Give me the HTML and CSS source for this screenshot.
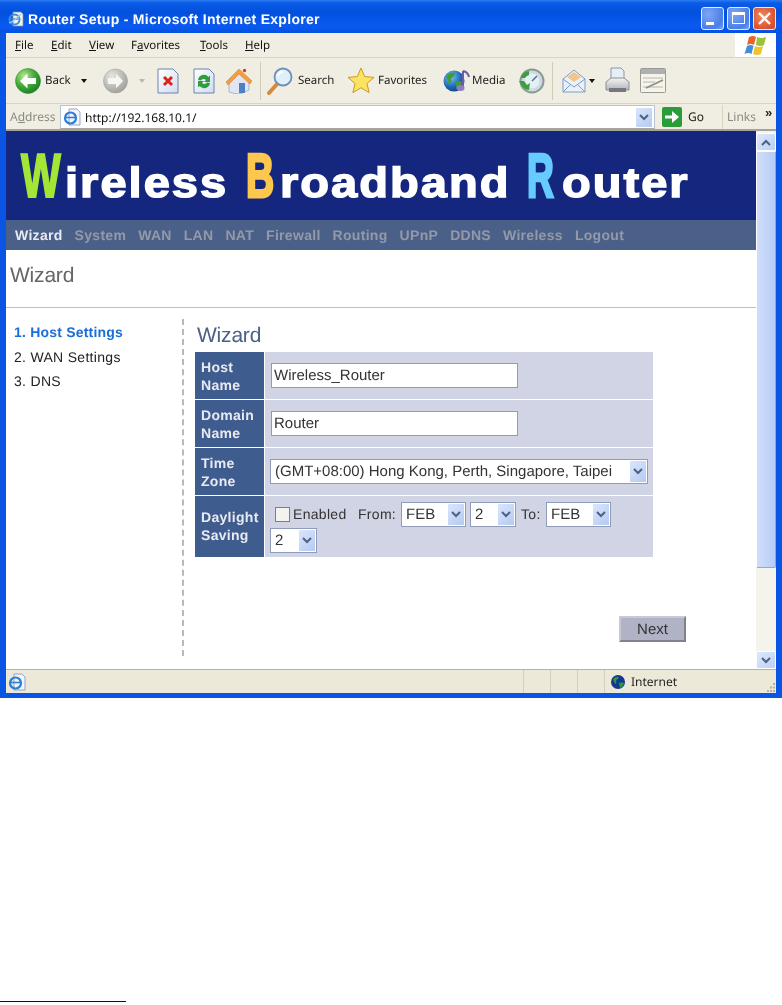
FILE: index.html
```html
<!DOCTYPE html>
<html lang="en">
<head>
<meta charset="utf-8">
<title>Router Setup</title>
<link rel="stylesheet" href="styles.css">
</head>
<body>
<svg class="defs" aria-hidden="true"><defs>
<radialGradient id="gGreen" cx=".35" cy=".3" r=".8"><stop offset="0" stop-color="#b8e890"/><stop offset=".5" stop-color="#45ab3a"/><stop offset="1" stop-color="#127a20"/></radialGradient>
<radialGradient id="gGray" cx=".35" cy=".3" r=".8"><stop offset="0" stop-color="#e6e6e0"/><stop offset="1" stop-color="#9b9b95"/></radialGradient>
<radialGradient id="gGlobe" cx=".35" cy=".3" r=".8"><stop offset="0" stop-color="#7fc4f5"/><stop offset=".6" stop-color="#1d67b8"/><stop offset="1" stop-color="#0d3a80"/></radialGradient>
<linearGradient id="gDoc" x1="0" y1="0" x2="1" y2="1"><stop offset="0" stop-color="#ffffff"/><stop offset="1" stop-color="#cfdcf2"/></linearGradient>
<linearGradient id="gTool" x1="0" y1="0" x2="0" y2="1"><stop offset="0" stop-color="#f5f5f2"/><stop offset="1" stop-color="#b3b5b8"/></linearGradient>
</defs></svg>

<div class="window">
  <header class="titlebar">
    <svg class="title-icon" width="16" height="16" viewBox="0 0 16 16"><path d="M5 1h8l2 2v12H5z" fill="#f4f1e6" stroke="#8a8f9c" stroke-width=".7"/><circle cx="6.500" cy="8.500" r="5" fill="none" stroke="#3a8ee0" stroke-width="2"/><path d="M3 8h7" stroke="#3a8ee0" stroke-width="1.500"/><path d="M1 12C5 11 10 6 13 3" fill="none" stroke="#9cd0f5" stroke-width="1.200"/></svg>
    <span class="title-text">Router Setup - Microsoft Internet Explorer</span>
    <div class="win-buttons">
      <span class="win-btn"><svg width="23" height="23" viewBox="0 0 23 23"><rect x="5" y="15" width="8" height="3" fill="#fff"/></svg></span>
      <span class="win-btn"><svg width="23" height="23" viewBox="0 0 23 23"><rect x="5.500" y="5.500" width="12" height="11" fill="none" stroke="#fff"/><rect x="5" y="5" width="13" height="3" fill="#fff"/></svg></span>
      <span class="win-btn win-close"><svg width="23" height="23" viewBox="0 0 23 23"><path d="M6 6l11 11M17 6L6 17" stroke="#fff" stroke-width="2.400"/></svg></span>
    </div>
  </header>

  <nav class="menubar">
    <span class="menu-item"><u>F</u>ile</span>
    <span class="menu-item"><u>E</u>dit</span>
    <span class="menu-item"><u>V</u>iew</span>
    <span class="menu-item">F<u>a</u>vorites</span>
    <span class="menu-item"><u>T</u>ools</span>
    <span class="menu-item"><u>H</u>elp</span>
    <span class="flag">
      <svg width="24" height="22" viewBox="0 0 24 22"><path d="M5 3q4-2 7 0l-2 8q-3-2-7 0z" fill="#e8642c"/><path d="M13 3q4 2 9 0l-2 8q-4 2-8 0z" fill="#9ac23c"/><path d="M3 12q4-2 6.500 0l-2 8q-3-2-7 0z" fill="#3d8fe0"/><path d="M11 12q4 2 8 0l-2 8q-4 2-8 0z" fill="#f2c22e"/></svg>
    </span>
  </nav>

  <div class="toolbar">
    <svg class="i-back" width="26" height="26" viewBox="0 0 26 26"><circle cx="13" cy="13" r="12.500" fill="url(#gGreen)" stroke="#2f7f2a" stroke-width=".5"/><path d="M5 13l7.500-7.500v4.500H21v6h-8.500v4.500z" fill="#fff"/></svg>
    <span class="lbl lbl-back">Back</span>
    <span class="caret c-back"></span>
    <svg class="i-forward" width="25" height="26" viewBox="0 0 26 26"><circle cx="13" cy="13" r="12.500" fill="url(#gGray)" stroke="#9a9a94" stroke-width=".5"/><path d="M21 13l-7.500-7.500v4.500H5v6h8.500v4.500z" fill="#f6f6f2"/></svg>
    <span class="caret caret-off c-forward"></span>
    <svg class="i-stop" width="22" height="26" viewBox="0 0 22 26"><path d="M1 1h15l5 5v19H1z" fill="url(#gDoc)" stroke="#6d83ad"/><path d="M7 9l8 8M15 9l-8 8" stroke="#d8251c" stroke-width="3"/></svg>
    <svg class="i-refresh" width="22" height="26" viewBox="0 0 22 26"><path d="M1 1h15l5 5v19H1z" fill="url(#gDoc)" stroke="#6d83ad"/><path d="M5 12a6 6 0 0 1 10.500-3L17 7.500V14h-6l2-2a3 3 0 0 0-5 .5z" fill="#2f9e3a"/><path d="M17 15a6 6 0 0 1-10.500 3L5 19.500V13h6l-2 2a3 3 0 0 0 5-.5z" fill="#2f9e3a"/></svg>
    <svg class="i-home" width="26" height="26" viewBox="0 0 26 26"><path d="M3 13v11q6 2 11 2l9-4V12L13 4z" fill="#dfe6f2" stroke="#8ea0bd" stroke-width=".7"/><rect x="13" y="15" width="6" height="10" fill="#4f7fc4"/><path d="M0 14L13 1l13 12-2 3L13 6 2 17z" fill="#f0a040" stroke="#c8772a" stroke-width=".5"/><circle cx="18.500" cy="2.500" r="1.700" fill="#d8392c"/></svg>
    <span class="tsep s-one"></span>
    <svg class="i-search" width="26" height="28" viewBox="0 0 26 28"><path d="M2 26L11 16" stroke="#d88a3a" stroke-width="4" stroke-linecap="round"/><circle cx="16" cy="10" r="8.500" fill="#dff0fb" stroke="#6f8fb8" stroke-width="1.800"/><path d="M11 9a5 5 0 0 1 5-4" fill="none" stroke="#fff" stroke-width="2"/></svg>
    <span class="lbl lbl-search">Search</span>
    <svg class="i-star" width="28" height="27" viewBox="0 0 28 27"><path d="M14 1l3.700 8.600 9.300.8-7 6.100 2.100 9.100-8.100-4.800-8.100 4.800 2.100-9.100-7-6.100 9.300-.8z" fill="#fde362" stroke="#c99a26"/></svg>
    <span class="lbl lbl-fav">Favorites</span>
    <svg class="i-media" width="27" height="26" viewBox="0 0 27 26"><circle cx="11" cy="13" r="10.500" fill="url(#gGlobe)"/><path d="M3 8q4-5 9-3-1 5-4 5 1 4-2 6zM12 14q4-2 7 0-1 6-5 7z" fill="#3e9c3a"/><path d="M20 3v15" stroke="#6d5aa8" stroke-width="2"/><path d="M20 3q5 1 6 6" fill="none" stroke="#6d5aa8" stroke-width="2"/><ellipse cx="17.500" cy="20" rx="4" ry="3" fill="#8d7cc4"/></svg>
    <span class="lbl lbl-media">Media</span>
    <svg class="i-history" width="27" height="26" viewBox="0 0 27 26"><circle cx="14" cy="13" r="11.500" fill="#cfd9de" stroke="#8a9a94" stroke-width="2"/><circle cx="14" cy="13" r="7.500" fill="#e4f0f8"/><path d="M14 13l5-5" stroke="#5a6f7a" stroke-width="1.500"/><path d="M1 13h5l3 4 3-2-1 7q-6 0-10-9z" fill="#3ba03a"/><path d="M3 10q1-6 8-7v4q-3 1-4 3z" fill="#3ba03a"/></svg>
    <span class="tsep s-two"></span>
    <svg class="i-mail" width="24" height="26" viewBox="0 0 24 26"><path d="M1 11L12 2l11 9v13H1z" fill="#eaf1fb" stroke="#7d9cc8"/><path d="M5 9l7-5 7 5-7 5z" fill="#f2c68a"/><path d="M1 11l11 8 11-8M1 24l8-8M23 24l-8-8" fill="none" stroke="#7d9cc8"/></svg>
    <span class="caret c-mail"></span>
    <svg class="i-print" width="25" height="27" viewBox="0 0 25 27"><path d="M6 1h10l3 3v10H6z" fill="#e8eef6" stroke="#8a97a8"/><path d="M1 15l5-4h13l5 4v8H1z" fill="url(#gTool)" stroke="#8a8f98"/><rect x="4" y="21" width="17" height="4" fill="#75797f"/></svg>
    <svg class="i-edit" width="26" height="25" viewBox="0 0 26 25"><rect x=".5" y=".5" width="25" height="24" rx="1" fill="#f5f3ea" stroke="#9a9a92"/><rect x="1" y="1" width="24" height="5" fill="#aeb0b2"/><path d="M3 10h20M3 14h12M3 19h20" stroke="#b8b8b0"/><path d="M6 20L23 12" stroke="#8d8d88" stroke-width="1.500"/></svg>
  </div>

  <div class="addressbar">
    <span class="addr-label">A<u>d</u>dress</span>
    <div class="addr-field">
      <svg class="addr-icon" width="18" height="18" viewBox="0 0 18 18"><path d="M6 1h8l3 3v13H6z" fill="#f4f5f8" stroke="#7f93b5" stroke-width=".8"/><circle cx="7.500" cy="10" r="5.500" fill="none" stroke="#2d7ed6" stroke-width="2.200"/><path d="M3 9.500h9" stroke="#2d7ed6" stroke-width="1.600"/></svg>
      <span class="addr-url">http://192.168.10.1/</span>
      <span class="arrow-btn addr-arrow"><svg width="10" height="7" viewBox="0 0 10 7"><path d="M1 1l4 4 4-4" fill="none" stroke="#4d6185" stroke-width="2"/></svg></span>
    </div>
    <svg class="go-icon" width="20" height="20" viewBox="0 0 20 20"><rect width="20" height="20" rx="2" fill="#2b9c3a"/><path d="M3 8.500h7V4l7 6-7 6v-4.500H3z" fill="#fff"/></svg>
    <span class="go-label">Go</span>
    <span class="links-sep"></span>
    <span class="links-label">Links</span>
    <span class="links-more">»</span>
  </div>

  <div class="viewport">
    <main class="page">
      <div class="banner">
        <span class="cap cap-w">W</span><span class="word w-one">ireless</span><span class="cap cap-b">B</span><span class="word w-two">roadband</span><span class="cap cap-r">R</span><span class="word">outer</span>
      </div>
      <nav class="tabs">
        <a class="tab tab-active">Wizard</a><a class="tab">System</a><a class="tab">WAN</a><a class="tab">LAN</a><a class="tab">NAT</a><a class="tab">Firewall</a><a class="tab">Routing</a><a class="tab">UPnP</a><a class="tab">DDNS</a><a class="tab">Wireless</a><a class="tab">Logout</a>
      </nav>
      <h1 class="page-title">Wizard</h1>
      <div class="content">
        <ol class="steps">
          <li class="step step-active">1. Host Settings</li>
          <li class="step">2. WAN Settings</li>
          <li class="step">3. DNS</li>
        </ol>
        <section class="pane">
          <h2 class="pane-title">Wizard</h2>
          <form class="form">
            <div class="f-label">Host<br>Name</div>
            <div class="f-value"><input class="text-input" type="text" value="Wireless_Router"></div>
            <div class="f-label">Domain<br>Name</div>
            <div class="f-value"><input class="text-input" type="text" value="Router"></div>
            <div class="f-label">Time<br>Zone</div>
            <div class="f-value f-tz">
              <span class="sel sel-tz"><select><option>(GMT+08:00) Hong Kong, Perth, Singapore, Taipei</option></select><span class="arrow-btn"><svg width="10" height="7" viewBox="0 0 10 7"><path d="M1 1l4 4 4-4" fill="none" stroke="#4d6185" stroke-width="2"/></svg></span></span>
            </div>
            <div class="f-label f-label-dst">Daylight<br>Saving</div>
            <div class="f-value f-dst">
              <div class="dst-line">
                <input class="check" type="checkbox"><span class="dst-enabled">Enabled</span><span class="dst-from">From:</span>
                <span class="sel sel-mon"><select><option>FEB</option></select><span class="arrow-btn"><svg width="10" height="7" viewBox="0 0 10 7"><path d="M1 1l4 4 4-4" fill="none" stroke="#4d6185" stroke-width="2"/></svg></span></span>
                <span class="sel sel-day"><select><option>2</option></select><span class="arrow-btn"><svg width="10" height="7" viewBox="0 0 10 7"><path d="M1 1l4 4 4-4" fill="none" stroke="#4d6185" stroke-width="2"/></svg></span></span>
                <span class="dst-to">To:</span>
                <span class="sel sel-mon"><select><option>FEB</option></select><span class="arrow-btn"><svg width="10" height="7" viewBox="0 0 10 7"><path d="M1 1l4 4 4-4" fill="none" stroke="#4d6185" stroke-width="2"/></svg></span></span>
              </div>
              <div class="dst-line">
                <span class="sel sel-day2"><select><option>2</option></select><span class="arrow-btn"><svg width="10" height="7" viewBox="0 0 10 7"><path d="M1 1l4 4 4-4" fill="none" stroke="#4d6185" stroke-width="2"/></svg></span></span>
              </div>
            </div>
          </form>
          <div class="actions"><button class="next" type="button">Next</button></div>
        </section>
      </div>
    </main>
    <aside class="scrollbar">
      <span class="sb-btn sb-up"><svg width="10" height="7" viewBox="0 0 10 7"><path d="M1 6l4-4 4 4" fill="none" stroke="#4d6185" stroke-width="2"/></svg></span>
      <span class="sb-thumb"></span>
      <span class="sb-track"></span>
      <span class="sb-btn"><svg width="10" height="7" viewBox="0 0 10 7"><path d="M1 1l4 4 4-4" fill="none" stroke="#4d6185" stroke-width="2"/></svg></span>
    </aside>
  </div>

  <footer class="statusbar">
    <svg class="st-icon" width="18" height="18" viewBox="0 0 18 18"><path d="M6 1h8l3 3v13H6z" fill="#f4f5f8" stroke="#7f93b5" stroke-width=".8"/><circle cx="7.500" cy="10" r="5.500" fill="none" stroke="#2d7ed6" stroke-width="2.200"/><path d="M3 9.500h9" stroke="#2d7ed6" stroke-width="1.600"/></svg>
    <span class="st-cell st-first"></span><span class="st-cell"></span><span class="st-cell"></span><span class="st-cell"></span>
    <svg class="st-globe" width="14" height="14" viewBox="0 0 14 14"><circle cx="7" cy="7" r="7" fill="#12388f"/><path d="M2 4q3-3 6-2-1 3-3 3 1 3-1 4zM8 8q3-1 5 0-1 4-4 5z" fill="#2f9a35"/></svg>
    <span class="st-zone">Internet</span>
    <svg class="st-grip" width="11" height="11" viewBox="0 0 11 11"><path d="M8 1h2v2H8zM5 4.500h2v2H5zM8 4.500h2v2H8zM2 8h2v2H2zM5 8h2v2H5zM8 8h2v2H8z" fill="#b5b29e"/></svg>
  </footer>
</div>
<div class="footnote-rule"></div>
</body>
</html>
```
FILE: styles.css
```css
* { box-sizing: border-box; text-rendering: geometricPrecision; }
html, body { margin: 0; height: 1005px; overflow: hidden; background: #fff; }
body { font-family: "Liberation Sans", Arial, sans-serif; }
.defs { position: absolute; width: 0; height: 0; }

.window {
  height: 698px;
  display: flex;
  flex-direction: column;
  padding: 0 6px 5px 0;
  background: #0a55e4;
  filter: blur(.4px);
}
.titlebar {
  height: 33px;
  margin-right: -6px;
  display: flex;
  align-items: center;
  padding: 4px 6px 0 8px;
  background: linear-gradient(180deg, #2c7cf0 0, #0a5ce8 3px, #0350dd 12px, #0a5af0 26px, #0550e0 33px);
}
.title-icon { flex: none; }
.title-text {
  margin-left: 4px;
  color: #fff;
  font: bold 14px "Liberation Sans", sans-serif;
  letter-spacing: .3px;
}
.win-buttons { margin-left: auto; display: flex; gap: 3px; }
.win-btn {
  width: 23px; height: 23px;
  border: 1px solid #e4ecfc;
  border-radius: 3px;
  background: radial-gradient(circle at 30% 30%, #7ea6f4, #4a7ee8 70%, #78a0ee);
  display: block;
  overflow: hidden;
}
.win-btn svg { display: block; margin: -1px; }
.win-close { background: radial-gradient(circle at 40% 40%, #ee8a66, #d9502a 75%); }

.menubar {
  height: 25px;
  margin-left: 6px;
  display: flex;
  align-items: center;
  padding-left: 9px;
  background: #f0eee2;
  border-bottom: 1px solid #d8d4c2;
  font: 11.500px "Noto Sans", sans-serif;
  color: #111;
}
.menu-item:nth-child(1) { width: 36px; }
.menu-item:nth-child(2) { width: 38px; }
.menu-item:nth-child(3) { width: 42px; }
.menu-item:nth-child(4) { width: 69px; }
.menu-item:nth-child(5) { width: 45px; }
.flag {
  margin-left: auto;
  width: 41px;
  height: 24px;
  background: #fff;
  display: flex;
  align-items: center;
  justify-content: center;
}

.toolbar {
  height: 46px;
  margin-left: 6px;
  display: flex;
  align-items: center;
  padding-left: 9px;
  background: #f0eee2;
  border-bottom: 1px solid #d8d4c2;
  flex: none;
}
.toolbar svg { flex: none; }
.lbl { font: 11.500px "Noto Sans", sans-serif; color: #222; white-space: nowrap; flex: none; }
.lbl-back { width: 25px; margin-left: 4px; }
.lbl-search { width: 37px; margin-left: 5px; }
.lbl-fav { width: 50px; margin-left: 3px; }
.lbl-media { width: 32px; margin-left: 2px; }
.caret { width: 0; height: 0; flex: none; border: 3px solid transparent; border-top: 4px solid #111; border-bottom: 0; }
.caret-off { border-top-color: #b9b8ac; }
.c-back { margin-left: 11px; }
.c-mail { margin-left: 3px; }
.c-forward { margin-left: 11px; }
.i-forward { margin-left: 16px; }
.i-stop { margin-left: 12px; }
.i-refresh { margin-left: 14px; }
.i-home { margin-left: 11px; }
.i-search { margin-left: 6px; }
.i-star { margin-left: 12px; }
.i-media { margin-left: 15px; }
.i-history { margin-left: 14px; }
.i-mail { margin-left: 9px; }
.i-print { margin-left: 10px; }
.i-edit { margin-left: 10px; }
.tsep { width: 1px; height: 38px; background: #cfcbb8; flex: none; }
.s-one { margin-left: 8px; }
.s-two { margin-left: 7px; }

.addressbar {
  height: 25px;
  margin-left: 6px;
  display: flex;
  align-items: center;
  background: #f0eee2;
  padding-left: 4px;
  flex: none;
}
.addr-label { width: 50px; font: 12px "Noto Sans", sans-serif; color: #8a8a80; }
.addr-field {
  width: 595px;
  height: 24px;
  margin-top: 1px;
  background: #fff;
  border: 1px solid #b7c3d8;
  border-bottom-color: #a7a89c;
  display: flex;
  align-items: center;
  padding: 0 2px 0 2px;
}
.addr-url { margin-left: 4px; font: 12px "Noto Sans", sans-serif; color: #111; }
.arrow-btn {
  width: 16px;
  background: linear-gradient(135deg, #dbe6fb, #b4caf2);
  display: flex;
  align-items: center;
  justify-content: center;
  flex: none;
}
.addr-arrow { margin-left: auto; height: 19px; }
.go-icon { margin-left: 7px; flex: none; }
.go-label { margin-left: 6px; width: 34px; font: 12px "Noto Sans", sans-serif; color: #222; }
.links-sep { width: 1px; height: 24px; background: #d8d4c2; }
.links-label { margin-left: 4px; width: 38px; font: 12px "Noto Sans", sans-serif; color: #8a8a80; }
.links-more { font: bold 13px "Liberation Sans", sans-serif; color: #222; margin-top: -8px; }

.viewport {
  height: 540px;
  margin-left: 6px;
  display: flex;
  border-top: 2px solid #a4a498;
  background: #fff;
  flex: none;
}
.page { width: 750px; flex: none; display: flex; flex-direction: column; }
.banner {
  height: 89px;
  flex: none;
  background: #15267f;
  display: flex;
  align-items: flex-end;
  padding: 0 0 19px 15px;
  color: #fff;
  font: bold 42px/36px "Liberation Sans", sans-serif;
  letter-spacing: 1.800px;
  -webkit-text-stroke: 1.400px #fff;
}
.word { display: block; height: 36px; margin-bottom: 0; white-space: nowrap; transform: scaleX(1.12); transform-origin: 0 50%; }
.w-one { width: 181px; }
.w-two { width: 247px; }
.cap {
  display: block;
  font-size: 62px;
  line-height: 50px;
  height: 50px;
  letter-spacing: 0;
  transform-origin: 0 50%;
  margin-bottom: -1px;
}
.cap-w { color: #a3e635; -webkit-text-stroke: 2px #a3e635; width: 44px; transform: scaleX(.68); }
.cap-b { color: #fcc74f; -webkit-text-stroke: 3px #fcc74f; width: 34px; transform: scaleX(.63); }
.cap-r { color: #66ccff; -webkit-text-stroke: 3px #66ccff; width: 35px; transform: scaleX(.6); }

.tabs {
  height: 30px;
  flex: none;
  display: flex;
  align-items: center;
  gap: 12px;
  padding-left: 9px;
  background: #4a6088;
}
.tab { font: bold 14px "Liberation Sans", sans-serif; letter-spacing: .3px; color: #9499a8; }
.tab-active { color: #e8eaf2; }
.page-title {
  height: 58px;
  flex: none;
  margin: 0;
  padding: 14px 0 0 4px;
  font: normal 21px/24px "Liberation Sans", sans-serif;
  letter-spacing: -.2px;
  color: #666;
  border-bottom: 1px solid #c0c0b8;
}
.content { display: flex; align-items: flex-start; padding-top: 11px; }
.steps {
  list-style: none;
  margin: 0;
  padding: 3px 0 0 8px;
  width: 178px;
  height: 337px;
  flex: none;
  border-right: 2px dashed #b9b9b9;
}
.step { height: 24.500px; font: 14px/20px "Liberation Sans", sans-serif; letter-spacing: .3px; color: #222; }
.step-active { font-weight: bold; color: #1a6ed8; letter-spacing: .2px; }
.pane { flex: 1; padding-left: 11px; }
.pane-title {
  margin: 0;
  padding: 5px 0 0 2px;
  height: 33px;
  font: normal 21px/24px "Liberation Sans", sans-serif;
  letter-spacing: -.2px;
  color: #4a6088;
}
.form {
  width: 458px;
  display: grid;
  grid-template-columns: 69px 1fr;
  grid-template-rows: 47px 47px 47px 61px;
  gap: 1px 1px;
}
.f-label {
  background: #3f5c8e;
  color: #e8eaf2;
  font: bold 14px/18px "Liberation Sans", sans-serif;
  letter-spacing: .3px;
  padding: 6px 0 0 6px;
}
.f-label-dst { padding-top: 12px; }
.f-value { background: #d0d4e4; padding: 11px 0 0 6px; }
.text-input {
  display: block;
  width: 247px;
  height: 25px;
  padding: 0 2px;
  border: 1px solid #8f9cb8;
  background: #fff;
  font: 15px "Liberation Sans", sans-serif;
  color: #333;
  outline: 0;
}
.f-tz { padding-left: 5px; }
.f-dst { padding: 5px 0 0 5px; font: 14px "Liberation Sans", sans-serif; color: #333; letter-spacing: .3px; }
.dst-line { display: flex; align-items: center; height: 26px; }
.check {
  appearance: none;
  width: 15px;
  height: 15px;
  margin: 0 0 0 5px;
  background: #f2f2ee;
  border: 1px solid #6f7f9f;
}
.dst-enabled { margin-left: 3px; width: 65px; }
.dst-from { width: 43px; }
.dst-to { margin-left: 5px; width: 25px; }
.sel {
  position: relative;
  display: block;
  height: 25px;
  flex: none;
}
.sel select {
  appearance: none;
  display: block;
  width: 100%;
  height: 100%;
  padding: 0 0 0 4px;
  border: 1px solid #8f9cb8;
  border-radius: 0;
  background: #fff;
  font: 15px "Liberation Sans", sans-serif;
  color: #333;
  outline: 0;
}
.sel .arrow-btn { position: absolute; top: 2px; right: 2px; bottom: 2px; }
.sel-tz { width: 378px; }
.sel-mon { width: 65px; }
.sel-day { width: 46px; margin-left: 4px; }
.sel-day2 { width: 47px; }
.actions { display: flex; justify-content: flex-end; padding: 59px 70px 0 0; }
.next {
  width: 67px;
  height: 26px;
  padding: 0;
  background: #b0b3c6;
  border: 2px solid;
  border-color: #c8c9d4 #80818f #80818f #c8c9d4;
  font: 15px "Liberation Sans", sans-serif;
  color: #333;
}

.scrollbar {
  width: 20px;
  flex: none;
  display: flex;
  flex-direction: column;
  padding-top: 2px;
  background: #f4f3ec;
}
.sb-btn {
  height: 18px;
  flex: none;
  border-radius: 2px;
  background: linear-gradient(135deg, #dde8fc, #bcd0f5);
  border: 1px solid #fff;
  display: flex;
  align-items: center;
  justify-content: center;
}
.sb-thumb {
  height: 417px;
  flex: none;
  border-radius: 2px;
  border: 1px solid #fff;
  border-right-color: #8ea6d8;
  border-bottom-color: #8ea6d8;
  background: linear-gradient(90deg, #d0defb, #b6ccf6);
}
.sb-track { flex: 1; }

.statusbar {
  flex: 1;
  margin-left: 6px;
  display: flex;
  align-items: center;
  background: #ece9d8;
  border-top: 1px solid #b5b29e;
  font: 12px "Noto Sans", sans-serif;
  color: #222;
  min-height: 0;
}
.st-icon { flex: none; margin-left: 2px; }
.st-cell { width: 27px; height: 100%; border-left: 1px solid #d4d0bc; flex: none; }
.st-first { margin-left: 497px; }
.st-globe { margin-left: -20px; flex: none; }
.st-zone { margin-left: 6px; }
.st-grip { margin-left: auto; flex: none; align-self: flex-end; }

.footnote-rule { width: 126px; height: 1px; margin-top: 303px; background: #111; }
```
